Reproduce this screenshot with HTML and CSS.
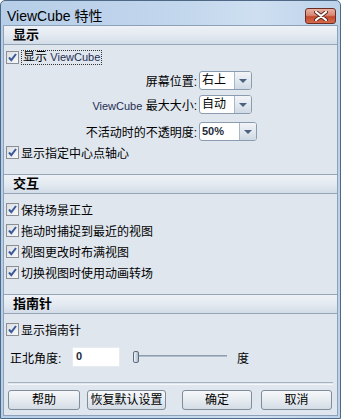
FILE: index.html
```html
<!DOCTYPE html>
<html lang="zh-CN">
<head>
    <meta charset="UTF-8">
    <title>ViewCube 特性</title>
    <link rel="stylesheet" href="styles.css">
</head>
<body>
<div class="window">
    <div class="titlebar">
        <span class="title">ViewCube 特性</span>
        <div class="close">
            <svg width="14" height="10" viewBox="0 0 14 10">
                <path d="M2 1 L12 9 M12 1 L2 9" stroke="#5a2a22" stroke-width="4" stroke-linecap="round"/>
                <path d="M2 1 L12 9 M12 1 L2 9" stroke="#ffffff" stroke-width="2.2" stroke-linecap="round"/>
            </svg>
        </div>
    </div>
    <div class="client">
        <div class="sec-head first">显示</div>
        <div class="sec-body display">
            <div class="check">
                <span class="box"><svg width="13" height="13" viewBox="0 0 13 13"><path d="M3 6.5 L5.3 9.2 L10 3" fill="none" stroke="#3b5a9a" stroke-width="2"/></svg></span>
                <span class="focus">显示 <span class="latin">ViewCube</span></span>
            </div>
            <div class="field f1">
                <span class="lbl">屏幕位置:</span>
                <div class="combo"><span class="val">右上</span><span class="arrow"></span></div>
            </div>
            <div class="field f2">
                <span class="lbl"><span class="latin">ViewCube</span> 最大大小:</span>
                <div class="combo"><span class="val">自动</span><span class="arrow"></span></div>
            </div>
            <div class="field f3">
                <span class="lbl">不活动时的不透明度:</span>
                <div class="combo wide"><span class="val small">50%</span><span class="arrow"></span></div>
            </div>
            <div class="check last">
                <span class="box"><svg width="13" height="13" viewBox="0 0 13 13"><path d="M3 6.5 L5.3 9.2 L10 3" fill="none" stroke="#3b5a9a" stroke-width="2"/></svg></span>
                <span>显示指定中心点轴心</span>
            </div>
        </div>

        <div class="sec-head">交互</div>
        <div class="sec-body interact">
            <div class="check">
                <span class="box"><svg width="13" height="13" viewBox="0 0 13 13"><path d="M3 6.5 L5.3 9.2 L10 3" fill="none" stroke="#3b5a9a" stroke-width="2"/></svg></span>
                <span>保持场景正立</span>
            </div>
            <div class="check">
                <span class="box"><svg width="13" height="13" viewBox="0 0 13 13"><path d="M3 6.5 L5.3 9.2 L10 3" fill="none" stroke="#3b5a9a" stroke-width="2"/></svg></span>
                <span>拖动时捕捉到最近的视图</span>
            </div>
            <div class="check">
                <span class="box"><svg width="13" height="13" viewBox="0 0 13 13"><path d="M3 6.5 L5.3 9.2 L10 3" fill="none" stroke="#3b5a9a" stroke-width="2"/></svg></span>
                <span>视图更改时布满视图</span>
            </div>
            <div class="check">
                <span class="box"><svg width="13" height="13" viewBox="0 0 13 13"><path d="M3 6.5 L5.3 9.2 L10 3" fill="none" stroke="#3b5a9a" stroke-width="2"/></svg></span>
                <span>切换视图时使用动画转场</span>
            </div>
        </div>

        <div class="sec-head">指南针</div>
        <div class="sec-body compass">
            <div class="check">
                <span class="box"><svg width="13" height="13" viewBox="0 0 13 13"><path d="M3 6.5 L5.3 9.2 L10 3" fill="none" stroke="#3b5a9a" stroke-width="2"/></svg></span>
                <span>显示指南针</span>
            </div>
            <div class="angle">
                <span class="angle-lbl">正北角度:</span>
                <div class="num">0</div>
                <div class="slider"><span class="track"></span><span class="thumb"></span></div>
                <span class="unit">度</span>
            </div>
        </div>

        <div class="sep"></div>
        <div class="buttons">
            <div class="btn b1">帮助</div>
            <div class="btn b2">恢复默认设置</div>
            <div class="btn b3">确定</div>
            <div class="btn b4">取消</div>
        </div>
    </div>
</div>
</body>
</html>
```

FILE: styles.css
```css
body {
    margin: 0;
    padding: 0;
    background-color: #ffffff;
    font-family: "Liberation Sans", "Noto Sans CJK SC", sans-serif;
    font-size: 12px;
    color: #000;
}
.window {
    width: 341px;
    height: 419px;
    box-sizing: border-box;
    border: 1px solid #4f6886;
    border-radius: 5px 5px 0 0;
    background: linear-gradient(to right, #b7cee8 0%, #c3d7ed 55%, #cfdff1 75%, #bcd2ea 100%);
    padding: 0 2px 2px 2px;
    display: flex;
    flex-direction: column;
    overflow: hidden;
}
.titlebar {
    height: 24px;
    display: flex;
    align-items: flex-start;
    justify-content: space-between;
}
.title {
    font-size: 14px;
    margin-top: 4px;
    margin-left: 4px;
    color: #000;
}
.close {
    width: 29px;
    height: 14px;
    margin-top: 7px;
    margin-right: 2px;
    border: 1px solid #6b2c22;
    border-radius: 3px;
    background: linear-gradient(to bottom, #e9b1a3 0%, #d98772 45%, #c4492e 55%, #d56a4c 100%);
    display: flex;
    align-items: center;
    justify-content: center;
}
.client {
    flex: 1;
    background-color: #dfe6ee;
    border: 1px solid #8da2b8;
    display: flex;
    flex-direction: column;
    overflow: hidden;
}
.sec-head {
    height: 18px;
    line-height: 18px;
    padding-left: 9px;
    font-size: 13px;
    font-weight: bold;
    border-top: 1px solid #96a6b8;
    border-bottom: 1px solid #96a6b8;
    background: linear-gradient(to bottom, #eef2f7 0%, #e4eaf1 50%, #d2dce7 100%);
}
.sec-head.first {
    border-top: none;
}
.latin {
    font-size: 11px;
    color: #1f2d52;
}
.check {
    height: 21px;
    display: flex;
    align-items: center;
    padding-left: 2px;
}
.box {
    width: 13px;
    height: 13px;
    box-sizing: border-box;
    border: 1px solid #8a8f96;
    background: linear-gradient(to bottom right, #dcdfe3, #f7f8f9);
    margin-right: 2px;
    display: flex;
}
.box svg {
    margin: -1px;
}
.focus {
    border: 1px dotted #333;
    line-height: 13px;
    padding: 0 1px;
}
.display {
    padding-top: 2px;
    padding-bottom: 11px;
}
.field {
    height: 19px;
    display: flex;
    align-items: center;
}
.f1 { margin-top: 3px; }
.f2 { margin-top: 5px; }
.f3 { margin-top: 8px; }
.check.last { margin-top: 1px; }
.lbl {
    width: 193px;
    text-align: right;
    margin-right: 2px;
}
.combo {
    width: 53px;
    height: 19px;
    box-sizing: border-box;
    border: 1px solid #8b9cb1;
    border-radius: 3px;
    background-color: #fff;
    display: flex;
    overflow: hidden;
}
.combo.wide {
    width: 58px;
}
.val {
    flex: 1;
    padding-left: 2px;
    line-height: 17px;
}
.val.small {
    font-size: 11px;
    font-weight: bold;
    color: #1e2a3a;
}
.arrow {
    width: 16px;
    border-left: 1px solid #a9b7c6;
    background: linear-gradient(to bottom, #f2f5f8, #cfd9e4);
    position: relative;
}
.arrow::after {
    content: "";
    position: absolute;
    left: 4px;
    top: 7px;
    border-left: 4px solid transparent;
    border-right: 4px solid transparent;
    border-top: 4px solid #4c5f7e;
}
.interact {
    padding-top: 5px;
    padding-bottom: 11px;
}
.compass {
    padding-top: 5px;
}
.angle {
    margin-top: 7px;
    height: 20px;
    display: flex;
    align-items: center;
    padding-left: 6px;
}
.angle-lbl {
    width: 62px;
}
.num {
    width: 48px;
    height: 20px;
    box-sizing: border-box;
    background-color: #fff;
    border: 1px solid #e6ebf0;
    font-size: 11px;
    font-weight: bold;
    color: #1e2a3a;
    padding-left: 3px;
    line-height: 16px;
}
.slider {
    width: 94px;
    height: 12px;
    margin-left: 13px;
    position: relative;
}
.track {
    position: absolute;
    left: 2px;
    right: 0;
    top: 4px;
    height: 3px;
    background: linear-gradient(to bottom, #7c8ea3, #b9c6d4 60%, #ffffff);
}
.thumb {
    position: absolute;
    left: 0;
    top: 0;
    width: 6px;
    height: 12px;
    box-sizing: border-box;
    border: 1px solid #5d6d80;
    border-radius: 2px;
    background: linear-gradient(to right, #f0f3f6, #aebccb);
}
.unit {
    margin-left: 10px;
}
.sep {
    margin: 15px 4px 0 4px;
    height: 1px;
    border-top: 1px solid #a5b2c0;
    border-bottom: 1px solid #f4f7fa;
}
.buttons {
    display: flex;
    margin-top: 5px;
    padding-left: 4px;
}
.btn {
    height: 20px;
    box-sizing: border-box;
    border: 1px solid #7f8c9a;
    border-radius: 3px;
    background: linear-gradient(to bottom, #f6f8fa 0%, #e6ebf0 50%, #d4dce5 100%);
    text-align: center;
    line-height: 18px;
}
.b1 { width: 72px; }
.b2 { width: 79px; margin-left: 7px; }
.b3 { width: 70px; margin-left: 16px; }
.b4 { width: 71px; margin-left: 9px; }
```
